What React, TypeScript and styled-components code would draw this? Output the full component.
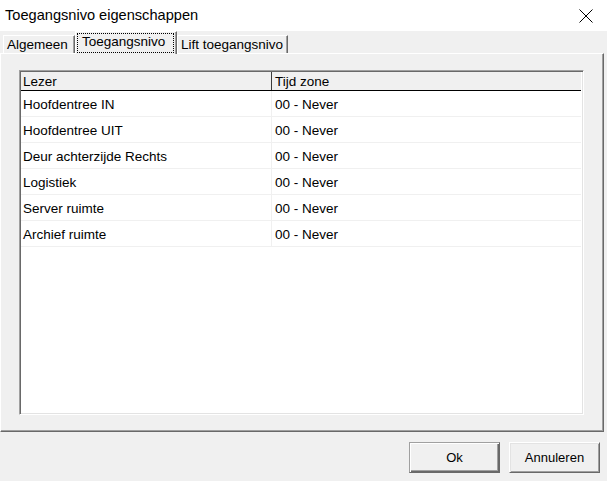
import React from "react";
import styled, { createGlobalStyle } from "styled-components";

const Global = createGlobalStyle`
  html, body { margin: 0; padding: 0; background: #f0f0f0; }
  body { font-family: "Liberation Sans", Arial, sans-serif; color: #000; }
`;

const Window = styled.div`
  width: 607px;
  height: 481px;
  background: #f0f0f0;
  display: flex;
  flex-direction: column;
  overflow: hidden;
`;

const TitleBar = styled.div`
  height: 31px;
  flex: none;
  background: #fff;
  display: flex;
  align-items: center;
  justify-content: space-between;
  padding: 0 14px 0 5px;
  box-sizing: border-box;
`;

const Title = styled.div`
  font-size: 14.6px;
  color: #000;
  margin-top: -1px;
`;

const CloseIcon = styled.svg`
  width: 14px;
  height: 14px;
  display: block;
`;

const TabStrip = styled.div`
  height: 22px;
  flex: none;
  display: flex;
  align-items: flex-end;
  padding-left: 3px;
  position: relative;
  z-index: 1;
`;

const Tab = styled.div<{ $w: number; $active?: boolean }>`
  width: ${(p) => p.$w}px;
  height: ${(p) => (p.$active ? 23 : 18)}px;
  margin-bottom: ${(p) => (p.$active ? -1 : 0)}px;
  box-sizing: border-box;
  background: #f0f0f0;
  border-top: 1px solid #fff;
  border-left: 1px solid #fff;
  border-right: 1px solid #696969;
  box-shadow: inset -1px 0 #a0a0a0;
  font-size: 13.5px;
  display: flex;
  align-items: flex-start;
  white-space: nowrap;
  padding: ${(p) => (p.$active ? "1px 2px 0 1px" : "1px 0 0 3px")};
`;

const FocusLabel = styled.span`
  display: block;
  width: 100%;
  box-sizing: border-box;
  border: 1px dotted #000;
  padding: 0 4px 2px 4px;
  line-height: 16px;
`;

const TabLabel = styled.span`
  display: block;
  line-height: 16px;
`;

const Panel = styled.div`
  flex: none;
  height: 379px;
  margin-right: 3px;
  box-sizing: border-box;
  border-top: 1px solid #fff;
  border-left: 1px solid #fff;
  border-right: 1px solid #696969;
  border-bottom: 1px solid #696969;
  box-shadow: inset -1px -1px #a0a0a0;
  padding: 16px 19px 16px 18px;
  display: flex;
`;

const ListView = styled.div`
  flex: 1;
  box-sizing: border-box;
  background: #fff;
  border-top: 1px solid #a0a0a0;
  border-left: 1px solid #a0a0a0;
  border-right: 1px solid #fff;
  border-bottom: 1px solid #fff;
  box-shadow: inset 1px 1px #696969, inset -1px -1px #e3e3e3;
  padding: 1px;
  display: flex;
  flex-direction: column;
  font-size: 13.5px;
`;

const HeaderRow = styled.div`
  display: grid;
  grid-template-columns: 251px 1fr;
  height: 19px;
  flex: none;
  box-sizing: border-box;
  background: #f0f0f0;
  border-bottom: 1px solid #000;
  margin-right: 1px;
`;

const HeaderCell = styled.div<{ $divider?: boolean }>`
  box-sizing: border-box;
  padding-left: ${(p) => (p.$divider ? 2 : 3)}px;
  border-right: ${(p) => (p.$divider ? "1px solid #3c3c3c" : "none")};
  line-height: 19px;
  white-space: nowrap;
  overflow: hidden;
`;

const Row = styled.div`
  display: grid;
  grid-template-columns: 251px 1fr;
  height: 26px;
  flex: none;
  box-sizing: border-box;
  border-bottom: 1px solid #f0f0f0;
  margin-right: 1px;
`;

const Cell = styled.div<{ $divider?: boolean }>`
  box-sizing: border-box;
  display: flex;
  align-items: center;
  padding: 2px 0 0 ${(p) => (p.$divider ? 2 : 3)}px;
  border-right: ${(p) => (p.$divider ? "1px solid #f0f0f0" : "none")};
  white-space: nowrap;
`;

const ButtonBar = styled.div`
  flex: 1;
  display: flex;
  justify-content: flex-end;
  align-items: flex-start;
  gap: 9px;
  padding: 10px 7px 0 0;
`;

const Button = styled.button<{ $default?: boolean }>`
  width: 91px;
  height: 31px;
  box-sizing: border-box;
  margin: 0;
  font-family: "Liberation Sans", Arial, sans-serif;
  font-size: 13px;
  color: #000;
  background: #f0f0f0;
  padding: 0 0 1px 0;
  border-top: 1px solid ${(p) => (p.$default ? "#a0a0a0" : "#fff")};
  border-left: 1px solid ${(p) => (p.$default ? "#a0a0a0" : "#fff")};
  border-right: 1px solid #696969;
  border-bottom: 1px solid #696969;
  box-shadow: ${(p) =>
    p.$default
      ? "inset 1px 1px #fff, inset -1px -1px #696969, inset -2px -2px #a0a0a0"
      : "inset 1px 1px #e3e3e3, inset -1px -1px #a0a0a0"};
`;

const rows = [
  "Hoofdentree IN",
  "Hoofdentree UIT",
  "Deur achterzijde Rechts",
  "Logistiek",
  "Server ruimte",
  "Archief ruimte",
];

export default function App() {
  return (
    <Window>
      <Global />
      <TitleBar>
        <Title>Toegangsnivo eigenschappen</Title>
        <CloseIcon viewBox="0 0 14 14">
          <path d="M0.5 0.5 L13.5 13.5 M13.5 0.5 L0.5 13.5" stroke="#000" strokeWidth="1" fill="none" />
        </CloseIcon>
      </TitleBar>
      <TabStrip>
        <Tab $w={72}>
          <TabLabel>Algemeen</TabLabel>
        </Tab>
        <Tab $w={102} $active>
          <FocusLabel>Toegangsnivo</FocusLabel>
        </Tab>
        <Tab $w={111}>
          <TabLabel>Lift toegangsnivo</TabLabel>
        </Tab>
      </TabStrip>
      <Panel>
        <ListView>
          <HeaderRow>
            <HeaderCell $divider>Lezer</HeaderCell>
            <HeaderCell>Tijd zone</HeaderCell>
          </HeaderRow>
          {rows.map((r) => (
            <Row key={r}>
              <Cell $divider>{r}</Cell>
              <Cell>00 - Never</Cell>
            </Row>
          ))}
        </ListView>
      </Panel>
      <ButtonBar>
        <Button $default>Ok</Button>
        <Button>Annuleren</Button>
      </ButtonBar>
    </Window>
  );
}
